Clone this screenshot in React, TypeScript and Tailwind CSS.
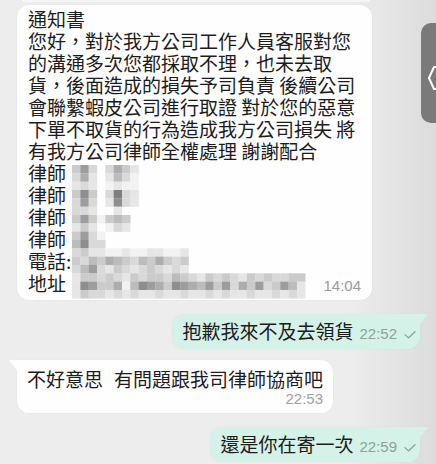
import React from "react";

const SHADE: Record<string, string> = {
  a: "#f2f2f2",
  b: "#e6e6e6",
  c: "#d9d9d9",
  d: "#cbcbcb",
  e: "#bcbcbc",
  f: "#adadad",
  g: "#9d9d9d",
  h: "#8e8e8e",
  i: "#7f7f7f",
};

const MOSAIC = [
  "dgc.cfdb",
  "cfb.beca",
  "bcb.abaa",
  "dhd.cicb",
  "cgc.bhcb",
  "ccb..b..",
  "dgdaded.",
  "bdb.acb.",
  "dgca....",
  "ehcc....",
  "cdbbaabaabbaab",
  "dcedfedcedfdcd",
  "cegcbdcbcdcbcb",
  "bddcdcbdcddcedcbdcdcbdcdccdd",
  "bhgddfaehgfdhgfegdgcfdgcdgeb",
  "bdccbcbcbbcbbcbbcbcbbcbbcbcb",
];

const CELL = 8.33;

function Mosaic() {
  return (
    <svg
      width={234}
      height={134}
      className="absolute left-[55px] top-[160px]"
      aria-hidden
    >
      {MOSAIC.flatMap((row, r) =>
        row.split("").map((ch, c) =>
          ch === "." ? null : (
            <rect
              key={`${r}-${c}`}
              x={c * CELL}
              y={r * CELL}
              width={CELL + 0.2}
              height={CELL + 0.2}
              fill={SHADE[ch]}
            />
          )
        )
      )}
    </svg>
  );
}

function Check() {
  return (
    <svg width="12" height="8" viewBox="0 0 12 8" className="ml-[7px] shrink-0">
      <path
        d="M1 3.6 L4.4 6.9 L11 0.8"
        fill="none"
        stroke="#8f9f9a"
        strokeWidth="1.3"
        strokeLinecap="round"
        strokeLinejoin="round"
      />
    </svg>
  );
}

function Outgoing({ text, time, mt }: { text: string; time: string; mt: string }) {
  return (
    <div className={`flex justify-end pr-[16px] ${mt}`}>
      <div className="relative flex h-[35px] items-baseline rounded-[12px] rounded-tr-none bg-[#d5f2e9] pl-[10px] pr-[4px] pt-[6px] shadow-[0_0_2px_rgba(0,0,0,0.05)]">
        <span className="whitespace-pre text-[19px] leading-[22px] text-[#1c1c1c]">{text}</span>
        <span className="ml-[6px] font-['Liberation_Sans',Arial,sans-serif] text-[15px] leading-[15px] text-[#8f9f9a]">
          {time}
        </span>
        <Check />
        <svg width="9" height="11" viewBox="0 0 9 11" className="absolute right-[-8px] top-0">
          <path d="M0 0 H7.5 Q9.5 0 8 1.8 L0 11 Z" fill="#d5f2e9" />
        </svg>
      </div>
    </div>
  );
}

export default function App() {
  const lines = [
    "通知書",
    "您好，對於我方公司工作人員客服對您",
    "的溝通多次您都採取不理，也未去取",
    "貨，後面造成的損失予司負責 後續公司",
    "會聯繫蝦皮公司進行取證 對於您的惡意",
    "下單不取貨的行為造成我方公司損失 將",
    "有我方公司律師全權處理 謝謝配合",
    "律師",
    "律師",
    "律師",
    "律師",
    "電話:",
  ];

  return (
    <div className="relative h-[464px] w-[436px] overflow-hidden bg-gradient-to-r from-[#ededed] from-[80%] to-[#dcdcdc] font-['Noto_Sans_CJK_TC','Noto_Sans',sans-serif]">
      <div className="ml-[22px] h-[2px] w-[348px] rounded-b-[4px] bg-[#f6f6f6]" />

      {/* notice bubble */}
      <div className="relative ml-[17px] mt-[3px] w-[355px] rounded-[12px] bg-[#fefefe] pb-[6px] pl-[11px] pr-[11px] pt-[3px] text-[19px] leading-[22px] text-[#1c1c1c] shadow-[0_0_2px_rgba(0,0,0,0.06)]">
        {lines.map((l, i) => (
          <div key={i} className="whitespace-pre">
            {l}
          </div>
        ))}
        <div className="flex items-baseline justify-between">
          <span>地址</span>
          <span className="font-['Liberation_Sans',Arial,sans-serif] text-[15px] leading-[15px] text-[#9b9b9b]">
            14:04
          </span>
        </div>
        <Mosaic />
      </div>

      <Outgoing text="抱歉我來不及去領貨" time="22:52" mt="mt-[14px]" />

      {/* incoming */}
      <div className="mt-[11px] flex pl-[17px]">
        <div className="relative rounded-[12px] rounded-tl-none bg-[#fefefe] pb-[5px] pl-[10px] pr-[10px] pt-[8px] text-[#1c1c1c] shadow-[0_0_2px_rgba(0,0,0,0.06)]">
          <div className="whitespace-pre text-[19px] leading-[22px]">
            不好意思<span className="inline-block w-[11px]"> </span>有問題跟我司律師協商吧
          </div>
          <div className="text-right font-['Liberation_Sans',Arial,sans-serif] text-[15px] leading-[18px] text-[#a0a0a0]">
            22:53
          </div>
          <svg width="9" height="11" viewBox="0 0 9 11" className="absolute left-[-8px] top-0">
            <path d="M9 0 H1.5 Q-0.5 0 1 1.8 L9 11 Z" fill="#fefefe" />
          </svg>
        </div>
      </div>

      <Outgoing text="還是你在寄一次" time="22:59" mt="mt-[14px]" />

      {/* floating side button */}
      <div className="absolute left-[421px] top-[23px] h-[100px] w-[30px] rounded-[10px] bg-[#7a7a7a]">
        <svg width="14" height="24" viewBox="0 0 14 24" className="absolute left-[7px] top-[43px]">
          <path
            d="M13 1 L6 1 L1 12 L6 23 L13 23"
            fill="none"
            stroke="#ffffff"
            strokeWidth="2"
            strokeLinejoin="round"
          />
        </svg>
      </div>
    </div>
  );
}
